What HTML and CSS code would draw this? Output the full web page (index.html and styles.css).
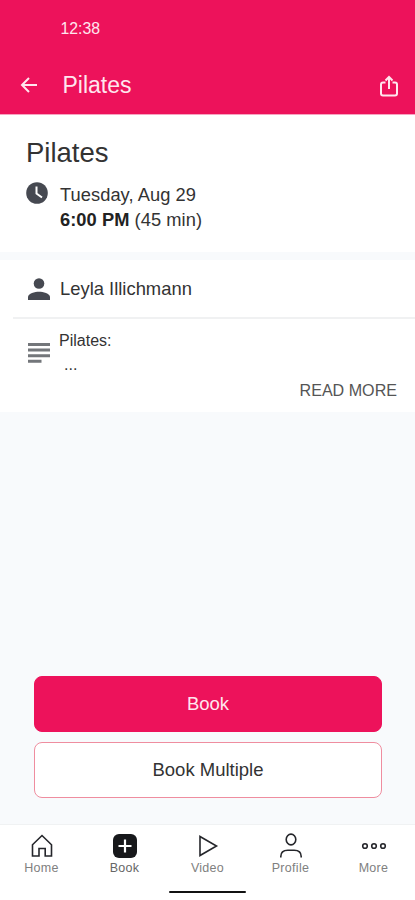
FILE: index.html
```
<!DOCTYPE html>
<html lang="en">
  <head>
    <meta charset="utf-8">
    <meta name="viewport" content="width=device-width, initial-scale=1">
    <title>Pilates</title>
    <link rel="stylesheet" href="styles.css">
  </head>
  <body>
    <header>
      <div class="status">12:38</div>
      <div class="toolbar">
        <svg class="back" width="18" height="18" viewBox="0 0 18 18">
          <path d="M17 9H2.500M9 2L2 9l7 7"/>
        </svg>
        <h1>Pilates</h1>
        <svg class="share" width="20" height="24" viewBox="0 0 20 24">
          <path d="M6.500 8.500H4q-2 0-2 2v9q0 2 2 2h12q2 0 2-2v-9q0-2-2-2h-2.500M10 15V3.500M6.500 6.500L10 3l3.500 3.500"/>
        </svg>
      </div>
    </header>

    <main>
      <section class="summary">
        <h2>Pilates</h2>
        <div class="when">
          <svg class="clock" width="22" height="22" viewBox="0 0 22 22">
            <circle cx="11" cy="11" r="10.800"/>
            <path d="M10.500 4.500v7l5.500 4"/>
          </svg>
          <div>
            <p>Tuesday, Aug 29</p>
            <p><strong>6:00 PM</strong> (45 min)</p>
          </div>
        </div>
      </section>

      <section class="details">
        <div class="teacher">
          <svg width="22" height="22" viewBox="0 0 22 22">
            <circle cx="11" cy="5.500" r="5.300"/>
            <path d="M0 22v-3c0-3.500 7-5.300 11-5.300s11 1.800 11 5.300v3z"/>
          </svg>
          <span>Leyla Illichmann</span>
        </div>
        <div class="description">
          <svg width="22" height="20" viewBox="0 0 22 20">
            <path d="M0 0h22v3H0zM0 5.600h22v3H0zM0 11.200h22v3H0zM0 16.800h13.500v3H0z"/>
          </svg>
          <div class="text">
            <p>Pilates:</p>
            <p class="dots">...</p>
          </div>
        </div>
        <a class="read-more">READ MORE</a>
      </section>
    </main>

    <div class="actions">
      <button class="book">Book</button>
      <button class="multiple">Book Multiple</button>
    </div>

    <nav>
      <a>
        <svg width="26" height="26" viewBox="0 0 26 26">
          <path d="M3.500 11.800L13 2.500l9.500 9.300v11.200h-6.300v-7.500H10v7.500H3.500z"/>
        </svg>
        <span>Home</span>
      </a>
      <a class="active">
        <svg width="26" height="26" viewBox="0 0 26 26">
          <rect x="1" y="1" width="24" height="24" rx="6"/>
          <path d="M13 6.500v13M6.500 13h13"/>
        </svg>
        <span>Book</span>
      </a>
      <a>
        <svg width="26" height="26" viewBox="0 0 26 26">
          <path d="M5 3.500L21.500 13 5 22.500z"/>
        </svg>
        <span>Video</span>
      </a>
      <a>
        <svg width="26" height="26" viewBox="0 0 26 26">
          <ellipse cx="13" cy="6.500" rx="4.800" ry="5.400"/>
          <path d="M2.800 24.500v-1q0-6.300 7-6.300h6.400q7 0 7 6.300v1"/>
        </svg>
        <span>Profile</span>
      </a>
      <a>
        <svg width="26" height="26" viewBox="0 0 26 26">
          <circle cx="4" cy="13" r="2.300"/>
          <circle cx="13" cy="13" r="2.300"/>
          <circle cx="22" cy="13" r="2.300"/>
        </svg>
        <span>More</span>
      </a>
    </nav>
    <div class="home-bar"></div>
  </body>
</html>
```
FILE: styles.css
```
* {
  box-sizing: border-box;
}

body {
  margin: 0;
  height: 900px;
  display: flex;
  flex-direction: column;
  background-color: #f8fafc;
  color: #333;
  font-family: "Liberation Sans", Arial, sans-serif;
  font-size: 18px;
}

h1, h2, p {
  margin: 0;
  font-weight: normal;
}

svg {
  flex: none;
  display: block;
}

/* header */
header {
  height: 115px;
  background-color: #ed125b;
  border-bottom: solid 1px #f7a3c0;
  color: #ffe6ee;
}

.status {
  height: 56px;
  padding-left: 60.5px;
  font-size: 15.8px;
  line-height: 57px;
}

.toolbar {
  height: 58px;
  padding: 0 16px 0 20px;
  display: flex;
  align-items: center;
}

.toolbar h1 {
  flex: 1;
  padding-left: 24.5px;
  font-size: 23px;
  line-height: 58px;
}

.back, .share {
  fill: none;
  stroke: #ffe6ee;
  stroke-width: 2;
}

.share {
  margin-top: 1px;
}

/* class info */
.summary {
  height: 137px;
  padding: 20px 26px 0;
  background-color: white;
}

.summary h2 {
  font-size: 27.5px;
  line-height: 36px;
}

.when {
  margin-top: 11px;
  display: flex;
  gap: 12px;
  font-size: 18.3px;
}

.when p {
  line-height: 24px;
  letter-spacing: 0.05px;
}

.when p:first-child {
  line-height: 26px;
}

.when strong {
  color: #222;
}

.clock circle {
  fill: #464951;
}

.clock path {
  fill: none;
  stroke: white;
  stroke-width: 2;
}

.details {
  height: 152px;
  margin-top: 8px;
  background-color: white;
}

.teacher {
  height: 59px;
  margin-left: 13px;
  padding-left: 15px;
  display: flex;
  align-items: center;
  gap: 10px;
  border-bottom: solid 2px #f0f1f2;
  font-size: 18.4px;
}

.teacher svg {
  fill: #464951;
}

.description {
  height: 58px;
  padding: 12px 28px 0;
  display: flex;
  gap: 9px;
  font-size: 16px;
}

.description svg {
  margin-top: 12px;
  fill: #73767a;
}

.description .text {
  line-height: 20px;
}

.description .dots {
  padding-left: 5px;
  line-height: 28px;
}

.read-more {
  display: block;
  padding-right: 18px;
  color: #555;
  font-size: 16.1px;
  line-height: 26px;
  text-align: right;
}

/* buttons */
.actions {
  margin-top: auto;
  padding: 0 33px 26px 34px;
  display: flex;
  flex-direction: column;
  gap: 10px;
}

.actions button {
  height: 56px;
  padding: 0;
  border: solid 1px #ed125b;
  border-radius: 8px;
  font-family: inherit;
  font-size: 18.5px;
}

.actions .book {
  background-color: #ed125b;
  color: #ffe6ee;
}

.actions .multiple {
  border-color: #ef8d9f;
  background-color: white;
  color: #333;
}

/* bottom tabs */
nav {
  height: 66px;
  padding-top: 8px;
  display: flex;
  border-top: solid 1px #f0f2f3;
  background-color: white;
}

nav a {
  flex: 1;
  display: flex;
  flex-direction: column;
  align-items: center;
  color: #808080;
  font-size: 12.5px;
  letter-spacing: 0.3px;
  line-height: 18px;
}

nav svg {
  fill: none;
  stroke: #25262b;
  stroke-width: 1.6;
}

nav .active {
  color: #666;
}

nav .active rect {
  fill: #17181b;
  stroke: none;
}

nav .active path {
  stroke: white;
  stroke-width: 2.2;
}

.home-bar {
  height: 10px;
  padding: 0 169px;
  background-color: white;
}

.home-bar::before {
  content: "";
  display: block;
  height: 2px;
  margin-top: 1px;
  border-radius: 1px;
  background-color: #111;
}
```
